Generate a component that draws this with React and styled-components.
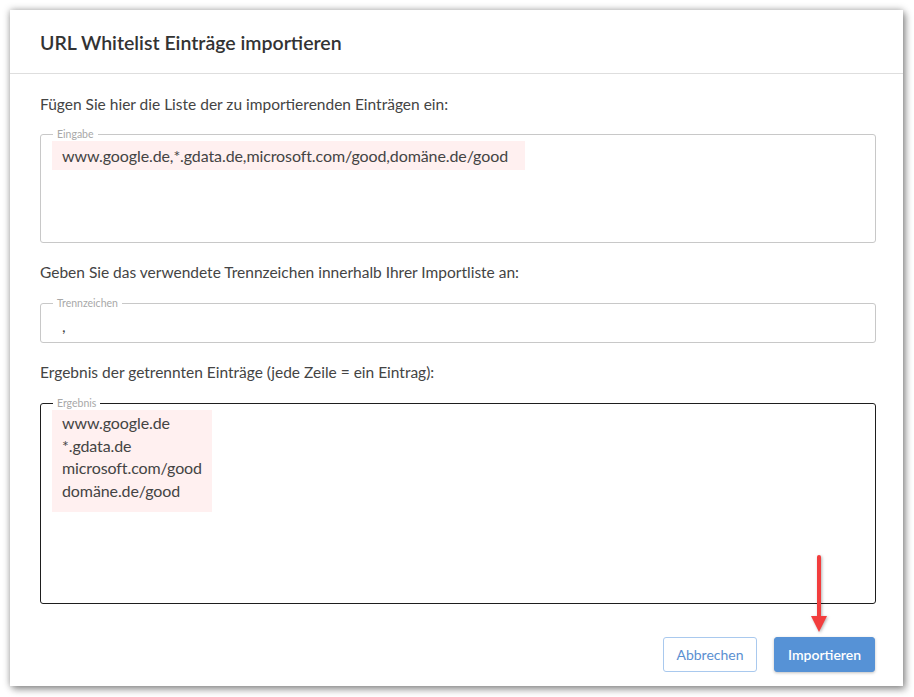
import React from "react";
import styled, { createGlobalStyle } from "styled-components";

const Global = createGlobalStyle`
  html, body { margin: 0; padding: 0; background: #ffffff; }
  body { font-family: "Lato", "Liberation Sans", sans-serif; }
`;

const Page = styled.div`
  width: 914px;
  height: 697px;
  padding: 10px 0 0 10px;
  box-sizing: border-box;
`;

const Dialog = styled.div`
  width: 893px;
  height: 676px;
  background: #fff;
  box-shadow: 0 0 7px rgba(0, 0, 0, 0.35), 3px 4px 7px rgba(0, 0, 0, 0.3);
  display: flex;
  flex-direction: column;
  box-sizing: border-box;
`;

const Header = styled.div`
  height: 64px;
  border-bottom: 1px solid #dedede;
  display: flex;
  align-items: center;
  padding: 2px 30px 0;
  box-sizing: border-box;
`;

const Title = styled.h1`
  margin: 0;
  font-size: 19.5px;
  font-weight: 600;
  color: #333;
`;

const Body = styled.div`
  padding: 18px 27px 0 30px;
  display: flex;
  flex-direction: column;
`;

const Label = styled.p`
  margin: 0 0 ${(p) => p.$gap}px 0;
  font-size: 15.5px;
  line-height: 24px;
  color: #444;
`;

const Field = styled.fieldset`
  margin: 0 0 ${(p) => p.$mb}px 0;
  padding: ${(p) => p.$pt}px 11px 0 11px;
  border: 1px solid ${(p) => (p.$focus ? "#1e1e1e" : "#c8c8c8")};
  border-radius: 3px;
  height: ${(p) => p.$h}px;
  box-sizing: border-box;
  min-width: 0;
`;

const Legend = styled.legend`
  font-size: 10.5px;
  line-height: 12px;
  color: #a8a8a8;
  padding: 0 4px;
  margin-left: 1px;
`;

const Highlight = styled.div`
  display: inline-block;
  background: #fff0f0;
  padding: ${(p) => p.$pad};
  font-size: 16px;
  line-height: ${(p) => p.$lh}px;
  color: #444;
  letter-spacing: -0.1px;
  width: ${(p) => p.$w}px;
  box-sizing: border-box;
`;

const Plain = styled.div`
  padding: 0 10px;
  font-size: 16px;
  line-height: 22px;
  color: #444;
`;

const Footer = styled.div`
  margin-top: auto;
  display: flex;
  justify-content: flex-end;
  align-items: flex-end;
  gap: 17px;
  padding: 0 28px 14px 0;
  box-sizing: border-box;
`;

const Button = styled.button`
  position: relative;
  height: 35px;
  width: ${(p) => p.$w}px;
  font-family: "Lato", "Liberation Sans", sans-serif;
  font-size: 14px;
  border-radius: 3px;
  cursor: pointer;
  border: 1px solid ${(p) => (p.$primary ? "#5692d6" : "#a9c9ee")};
  background: ${(p) => (p.$primary ? "#5692d6" : "#fff")};
  color: ${(p) => (p.$primary ? "#fff" : "#5b8fd1")};
  font-weight: ${(p) => (p.$primary ? 600 : 400)};
  box-shadow: ${(p) => (p.$primary ? "0 1px 3px rgba(0,0,0,0.25)" : "none")};
`;

const Arrow = styled.svg`
  position: absolute;
  left: 36px;
  bottom: 37px;
  overflow: visible;
  filter: drop-shadow(1px 1px 1.5px rgba(0, 0, 0, 0.3));
`;

export default function App() {
  return (
    <>
      <Global />
      <Page>
        <Dialog>
          <Header>
            <Title>URL Whitelist Einträge importieren</Title>
          </Header>
          <Body>
            <Label $gap={12}>Fügen Sie hier die Liste der zu importierenden Einträgen ein:</Label>
            <Field $h={115} $pt={1} $mb={17}>
              <Legend>Eingabe</Legend>
              <Highlight $pad="4px 10px" $lh={21} $w={473}>
                www.google.de,*.gdata.de,microsoft.com/good,domäne.de/good
              </Highlight>
            </Field>
            <Label $gap={13}>Geben Sie das verwendete Trennzeichen innerhalb Ihrer Importliste an:</Label>
            <Field $h={46} $pt={6} $mb={17}>
              <Legend>Trennzeichen</Legend>
              <Plain>,</Plain>
            </Field>
            <Label $gap={13}>Ergebnis der getrennten Einträge (jede Zeile = ein Eintrag):</Label>
            <Field $h={207} $pt={1} $mb={0} $focus>
              <Legend>Ergebnis</Legend>
              <Highlight $pad="2px 10px 10px" $lh={22.6} $w={160}>
                www.google.de
                <br />
                *.gdata.de
                <br />
                microsoft.com/good
                <br />
                domäne.de/good
              </Highlight>
            </Field>
          </Body>
          <Footer>
            <Button $w={94}>Abbrechen</Button>
            <Button $w={101} $primary>
              Importieren
              <Arrow width="16" height="80" viewBox="0 0 16 80">
                <line x1="8" y1="3" x2="8" y2="66" stroke="#f23d3d" strokeWidth="4" strokeLinecap="round" />
                <polygon points="0,62 16,62 8,78" fill="#f23d3d" />
              </Arrow>
            </Button>
          </Footer>
        </Dialog>
      </Page>
    </>
  );
}
